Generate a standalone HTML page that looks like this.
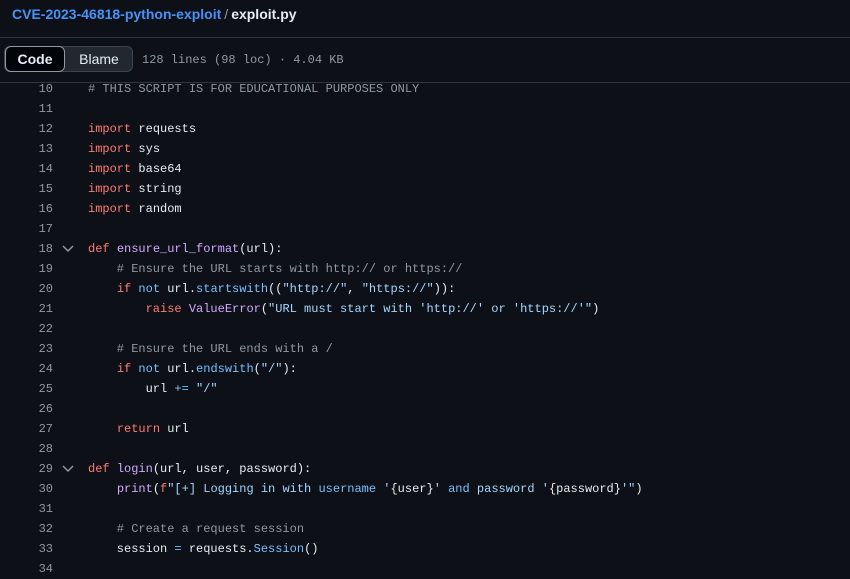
<!DOCTYPE html><html><head><style>
body{margin:0;background:#0d1117;width:850px;height:573px;overflow:hidden;font-family:"Liberation Sans",sans-serif;color:#e6edf3}
.top{height:37px;background:#0d1117;border-bottom:1px solid #30363d;position:relative}
.t{position:absolute;left:12px;top:6px;font-size:14px;font-weight:bold}
.t a{color:#4493f8}.t span{color:#9198a1;font-weight:normal;margin:0 3px}
.bar{height:44px;background:#0d1117;border-bottom:1px solid #30363d;position:relative}
.seg{position:absolute;left:4px;top:8px;height:26px;width:129px;border:1px solid #3d444d;border-radius:6px;background:#212830;box-sizing:border-box}
.code{position:absolute;left:0;top:-1px;width:60px;height:26px;border:1px solid #9198a1;border-radius:6px;background:#010409;box-sizing:border-box;font-size:14px;font-weight:bold;text-align:center;line-height:24px}
.blame{position:absolute;left:60px;width:68px;line-height:24px;text-align:center;font-size:14px}
.info{position:absolute;left:142px;top:15px;font:12px "Liberation Mono",monospace;color:#9198a1}
.l{height:20px;line-height:20px;font:12px/20px "Liberation Mono",monospace;position:relative;white-space:pre}
.n{position:absolute;right:797px;color:#9198a1;text-align:right}
.c{position:absolute;left:88px;color:#e6edf3}
.k{color:#ff7b72}.f{color:#d2a8ff}.s{color:#a5d6ff}.m{color:#9198a1}.b{color:#79c0ff}
.ch{position:absolute;left:62px;top:6px}
</style></head><body>
<div class="top"><div class="t"><a>CVE-2023-46818-python-exploit</a><span>/</span>exploit.py</div></div>
<div class="bar"><div class="seg"><div class="code">Code</div><div class="blame">Blame</div></div><div class="info">128 lines (98 loc) · 4.04 KB</div></div>
<div style="margin-top:-4px">
<div class="l"><span class="n">10</span><span class="c m"># THIS SCRIPT IS FOR EDUCATIONAL PURPOSES ONLY</span></div>
<div class="l"><span class="n">11</span></div>
<div class="l"><span class="n">12</span><span class="c"><span class="k">import</span> requests</span></div>
<div class="l"><span class="n">13</span><span class="c"><span class="k">import</span> sys</span></div>
<div class="l"><span class="n">14</span><span class="c"><span class="k">import</span> base64</span></div>
<div class="l"><span class="n">15</span><span class="c"><span class="k">import</span> string</span></div>
<div class="l"><span class="n">16</span><span class="c"><span class="k">import</span> random</span></div>
<div class="l"><span class="n">17</span></div>
<div class="l"><span class="n">18</span><svg class="ch" width="12" height="8"><path d="M1 1l5 5 5-5" stroke="#9198a1" stroke-width="1.5" fill="none"/></svg><span class="c"><span class="k">def</span> <span class="f">ensure_url_format</span>(url):</span></div>
<div class="l"><span class="n">19</span><span class="c m">    # Ensure the URL starts with http:// or https://</span></div>
<div class="l"><span class="n">20</span><span class="c">    <span class="k">if</span> <span class="b">not</span> url.<span class="b">startswith</span>((<span class="s">"http://"</span>, <span class="s">"https://"</span>)):</span></div>
<div class="l"><span class="n">21</span><span class="c">        <span class="k">raise</span> <span class="f">ValueError</span>(<span class="s">"URL must start with 'http://' or 'https://'"</span>)</span></div>
<div class="l"><span class="n">22</span></div>
<div class="l"><span class="n">23</span><span class="c m">    # Ensure the URL ends with a /</span></div>
<div class="l"><span class="n">24</span><span class="c">    <span class="k">if</span> <span class="b">not</span> url.<span class="b">endswith</span>(<span class="s">"/"</span>):</span></div>
<div class="l"><span class="n">25</span><span class="c">        url <span class="b">+=</span> <span class="s">"/"</span></span></div>
<div class="l"><span class="n">26</span></div>
<div class="l"><span class="n">27</span><span class="c">    <span class="k">return</span> url</span></div>
<div class="l"><span class="n">28</span></div>
<div class="l"><span class="n">29</span><svg class="ch" width="12" height="8"><path d="M1 1l5 5 5-5" stroke="#9198a1" stroke-width="1.5" fill="none"/></svg><span class="c"><span class="k">def</span> <span class="f">login</span>(url, user, password):</span></div>
<div class="l"><span class="n">30</span><span class="c">    <span class="f">print</span>(<span class="k">f</span><span class="s">"[+] Logging in with </span><span class="b">username</span><span class="s"> '</span>{user}<span class="s">' </span><span class="b">and</span><span class="s"> password '</span>{password}<span class="s">'"</span>)</span></div>
<div class="l"><span class="n">31</span></div>
<div class="l"><span class="n">32</span><span class="c m">    # Create a request session</span></div>
<div class="l"><span class="n">33</span><span class="c">    session <span class="b">=</span> requests.<span class="b">Session</span>()</span></div>
<div class="l"><span class="n">34</span></div>
</div>
</body></html>
